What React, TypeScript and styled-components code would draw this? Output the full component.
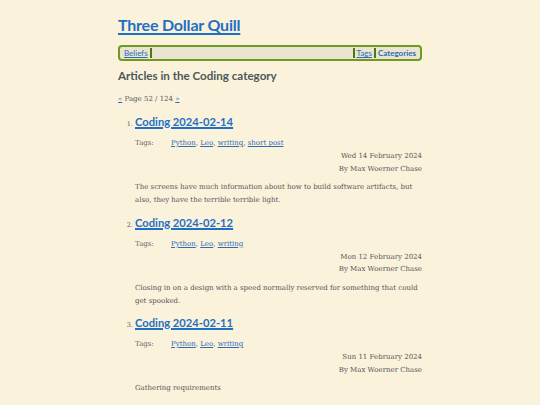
import React from "react";
import styled, { createGlobalStyle } from "styled-components";

const GlobalStyle = createGlobalStyle`
  html, body {
    margin: 0;
    padding: 0;
    background: #fbf2dc;
  }
  body {
    font-family: "DejaVu Serif", "Liberation Serif", serif;
    color: #555;
  }
`;

const Page = styled.div`
  width: 304px;
  margin: 0 auto;
  padding-top: 14px;
`;

const SiteTitle = styled.a`
  display: block;
  font-family: "Lato", "Open Sans", sans-serif;
  font-weight: 700;
  font-size: 16px;
  letter-spacing: -0.2px;
  line-height: 22px;
  color: #1f6fc4;
  text-decoration: underline;
  text-decoration-thickness: 2px;
  text-underline-offset: 2px;
`;

const NavBar = styled.nav`
  margin-top: 9px;
  height: 12px;
  display: flex;
  align-items: center;
  border: 2px solid #6d9a22;
  border-radius: 4px;
  background: #ebe4d0;
  padding: 0 2px 0 2px;
  font-family: "Lato", "Open Sans", sans-serif;
  font-size: 8px;
`;

const NavLink = styled.a<{ $bold?: boolean }>`
  color: #2a6db8;
  font-weight: ${(p) => (p.$bold ? 700 : 400)};
  text-decoration: ${(p) => (p.$bold ? "none" : "underline")};
  padding: 0 2px;
`;

const NavSep = styled.span`
  width: 2px;
  height: 10px;
  background: #4b7a14;
`;

const NavSpacer = styled.span`
  flex: 1;
`;

const Heading = styled.h2`
  margin: 7px 0 0;
  font-family: "Lato", "Open Sans", sans-serif;
  font-weight: 700;
  font-size: 11.6px;
  line-height: 16px;
  color: #4d5858;
`;

const Pager = styled.div`
  margin-top: 10px;
  font-size: 7px;
  line-height: 10px;
  color: #555;
  a {
    color: #2a6db8;
    text-decoration: underline;
  }
`;

const List = styled.ol`
  margin: 10px 0 0;
  padding-left: 17px;
  font-size: 6.5px;
  li::marker {
    color: #555;
  }
`;

const Item = styled.li`
  margin-bottom: 7.5px;
`;

const ItemTitle = styled.a`
  display: inline-block;
  font-family: "Lato", "Open Sans", sans-serif;
  font-weight: 700;
  font-size: 11.2px;
  line-height: 16px;
  color: #1f6fc4;
  text-decoration: underline;
  text-decoration-thickness: 1.5px;
  text-underline-offset: 1px;
`;

const TagRow = styled.div`
  display: flex;
  margin-top: 7px;
  font-size: 7px;
  line-height: 13px;
`;

const TagLabel = styled.span`
  width: 36px;
  color: #666;
`;

const TagLink = styled.a`
  color: #2a6db8;
  text-decoration: underline;
`;

const Meta = styled.div`
  text-align: right;
  font-size: 7px;
  line-height: 12.5px;
  color: #555;
`;

const Summary = styled.p`
  margin: 6px 0 0;
  font-size: 7px;
  line-height: 13px;
  color: #555;
`;

type Post = {
  title: string;
  tags: string[];
  date: string;
  summary: string;
};

const posts: Post[] = [
  {
    title: "Coding 2024-02-14",
    tags: ["Python", "Leo", "writing", "short post"],
    date: "Wed 14 February 2024",
    summary:
      "The screens have much information about how to build software artifacts, but also, they have the terrible terrible light.",
  },
  {
    title: "Coding 2024-02-12",
    tags: ["Python", "Leo", "writing"],
    date: "Mon 12 February 2024",
    summary:
      "Closing in on a design with a speed normally reserved for something that could get spooked.",
  },
  {
    title: "Coding 2024-02-11",
    tags: ["Python", "Leo", "writing"],
    date: "Sun 11 February 2024",
    summary: "Gathering requirements",
  },
];

const App = () => {
  return (
    <>
      <GlobalStyle />
      <Page>
        <SiteTitle href="#">Three Dollar Quill</SiteTitle>
        <NavBar>
          <NavLink href="#">Beliefs</NavLink>
          <NavSep />
          <NavSpacer />
          <NavSep />
          <NavLink href="#">Tags</NavLink>
          <NavSep />
          <NavLink href="#" $bold>
            Categories
          </NavLink>
        </NavBar>
        <Heading>Articles in the Coding category</Heading>
        <Pager>
          <a href="#">«</a> Page 52 / 124 <a href="#">»</a>
        </Pager>
        <List>
          {posts.map((post) => (
            <Item key={post.title}>
              <ItemTitle href="#">{post.title}</ItemTitle>
              <TagRow>
                <TagLabel>Tags:</TagLabel>
                <span>
                  {post.tags.map((tag, i) => (
                    <React.Fragment key={tag}>
                      <TagLink href="#">{tag}</TagLink>
                      {i < post.tags.length - 1 ? ", " : ""}
                    </React.Fragment>
                  ))}
                </span>
              </TagRow>
              <Meta>
                {post.date}
                <br />
                By Max Woerner Chase
              </Meta>
              <Summary>{post.summary}</Summary>
            </Item>
          ))}
        </List>
      </Page>
    </>
  );
};

export default App;
